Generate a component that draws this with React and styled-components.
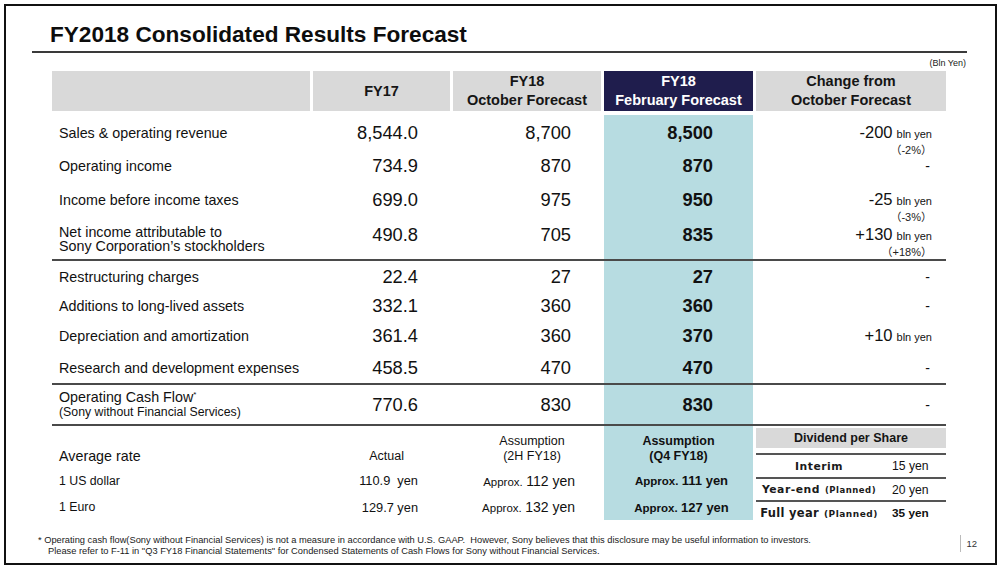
import React from 'react';
import styled, { createGlobalStyle } from 'styled-components';

const COLS = '258px 137px 148px 149px 190px';
const TEAL = '#b7dce1';
const NAVY = '#1f1d4d';
const GRAY = '#d9d9d9';
const RULE = '#4a4a4a';

const results = [
    { label: ['Sales & operating revenue'], fy17: '8,544.0', oct: '8,700', feb: '8,500', change: '-200', pct: '（-2%）', h: 36 },
    { label: ['Operating income'], fy17: '734.9', oct: '870', feb: '870', h: 30 },
    { label: ['Income before income taxes'], fy17: '699.0', oct: '975', feb: '950', change: '-25', pct: '（-3%）', h: 38 },
    { label: ['Net income attributable to', 'Sony Corporation’s stockholders'], fy17: '490.8', oct: '705', feb: '835', change: '+130', pct: '（+18%）', h: 40, lift: 8 },
];

const spending = [
    { label: ['Restructuring charges'], fy17: '22.4', oct: '27', feb: '27', h: 33 },
    { label: ['Additions to long-lived assets'], fy17: '332.1', oct: '360', feb: '360', h: 28 },
    { label: ['Depreciation and amortization'], fy17: '361.4', oct: '360', feb: '370', change: '+10', h: 32 },
    { label: ['Research and development expenses'], fy17: '458.5', oct: '470', feb: '470', h: 31 },
];

const rates = [
    { label: '1 US dollar', actual: '110.9  yen', oct: '112 yen', feb: '111 yen' },
    { label: '1 Euro', actual: '129.7 yen', oct: '132 yen', feb: '127 yen' },
];

const dividends = [
    { label: 'Interim', value: '15 yen', h: 24 },
    { label: 'Year-end', planned: true, value: '20 yen', h: 23 },
    { label: 'Full year', planned: true, value: '35 yen', h: 23, total: true },
];

const ResultRow = ({ row, rule }) => (
    <Row $h={row.h} $rule={rule} $lift={row.lift}>
        <Label $lh={row.label.length > 1 ? 14 : 20}>
            {row.label.map((l) => <span key={l}>{l}</span>)}
        </Label>
        <Num $pr={32}>{row.fy17}</Num>
        <Num $pr={30}>{row.oct}</Num>
        <Num $pr={40} $bold $teal>{row.feb}</Num>
        <Change>
            {row.change ? (
                <>
                    <ChangeMain>{row.change}<Unit>bln yen</Unit></ChangeMain>
                    {row.pct && <Pct>{row.pct}</Pct>}
                </>
            ) : (
                <Dash>-</Dash>
            )}
        </Change>
    </Row>
);

export default function App() {
    return (
        <>
            <GlobalStyle />
            <Slide>
                <TitleBar>
                    <Title>FY2018 Consolidated Results Forecast</Title>
                </TitleBar>
                <UnitNote>(Bln Yen)</UnitNote>

                <Table>
                    <HeadRow>
                        <HeadCell $bg={GRAY} />
                        <HeadCell $bg={GRAY}>FY17</HeadCell>
                        <HeadCell $bg={GRAY}><span>FY18</span><span>October Forecast</span></HeadCell>
                        <HeadCell $bg={NAVY} $light><span>FY18</span><span>February Forecast</span></HeadCell>
                        <HeadCell $bg={GRAY}><span>Change from</span><span>October Forecast</span></HeadCell>
                    </HeadRow>

                    <Body>
                        {results.map((r) => <ResultRow key={r.label[0]} row={r} />)}
                        {spending.map((r, i) => <ResultRow key={r.label[0]} row={r} rule={i === 0} />)}

                        <Row $h={41} $rule>
                            <Label $lh={15}>
                                <span>Operating Cash Flow<Star>*</Star></span>
                                <LabelSub>(Sony without Financial Services)</LabelSub>
                            </Label>
                            <Num $pr={32}>770.6</Num>
                            <Num $pr={30}>830</Num>
                            <Num $pr={40} $bold $teal>830</Num>
                            <Change><Dash>-</Dash></Change>
                        </Row>

                        <Rates>
                            <RateHead $pl={7}><RateTitle>Average rate</RateTitle></RateHead>
                            <RateHead $right $pr={46}>Actual</RateHead>
                            <RateHead $pl={10}><span>Assumption</span><span>(2H FY18)</span></RateHead>
                            <RateHead $teal $bold><span>Assumption</span><span>(Q4 FY18)</span></RateHead>

                            <Dividend>
                                <DivHead>Dividend per Share</DivHead>
                                {dividends.map((d) => (
                                    <DivRow key={d.label} $h={d.h}>
                                        <DivLabel $total={d.total}>
                                            {d.label}
                                            {d.planned && <Planned $total={d.total}>(Planned)</Planned>}
                                        </DivLabel>
                                        <DivValue $bold={d.total}>{d.value}</DivValue>
                                    </DivRow>
                                ))}
                            </Dividend>

                            {rates.map((r) => (
                                <React.Fragment key={r.label}>
                                    <RateCell $pl={7}>{r.label}</RateCell>
                                    <RateCell $right $pr={32} $size={12.8}>{r.actual}</RateCell>
                                    <RateCell $right $pr={26}>
                                        <span><Approx>Approx.</Approx> <RateNum>{r.oct}</RateNum></span>
                                    </RateCell>
                                    <RateCell $teal $bold $pl={6}>
                                        <span><Approx>Approx.</Approx> <RateNum $bold>{r.feb}</RateNum></span>
                                    </RateCell>
                                </React.Fragment>
                            ))}
                        </Rates>
                    </Body>
                </Table>

                <Footer>
                    <Note>
                        <span>* Operating cash flow(Sony without Financial Services) is not a measure in accordance with U.S. GAAP.&nbsp; However, Sony believes that this disclosure may be useful information to investors.</span>
                        <NoteIndent>Please refer to F-11 in "Q3 FY18 Financial Statements" for Condensed Statements of Cash Flows for Sony without Financial Services.</NoteIndent>
                    </Note>
                    <PageNo>12</PageNo>
                </Footer>
            </Slide>
        </>
    );
}

const GlobalStyle = createGlobalStyle`
    html, body {
        margin: 0;
        padding: 0;
        background: #fff;
    }
    body {
        font-family: "Liberation Sans", Arial, sans-serif;
        color: #111;
    }
`;

const Slide = styled.div`
    box-sizing: border-box;
    width: 993px;
    height: 561px;
    margin: 4px 0 0 4px;
    border: 2px solid #111;
    overflow: hidden;
    background: #fff;
`;

const TitleBar = styled.div`
    width: 935px;
    margin-left: 26px;
    padding: 15px 0 3px 18px;
    box-sizing: border-box;
    border-bottom: 2px solid #3a3a3a;
`;

const Title = styled.h1`
    margin: 0;
    font-size: 22.6px;
    line-height: 27px;
    font-weight: 700;
    color: #0d0d0d;
`;

const UnitNote = styled.div`
    width: 934px;
    margin: 4px 0 2px 26px;
    text-align: right;
    font-size: 9px;
    line-height: 12px;
    color: #222;
`;

const Table = styled.div`
    width: 894px;
    margin-left: 46px;
`;

const HeadRow = styled.div`
    display: grid;
    grid-template-columns: ${COLS};
    column-gap: 3px;
    height: 40px;
`;

const HeadCell = styled.div`
    display: flex;
    flex-direction: column;
    align-items: center;
    justify-content: center;
    background: ${({ $bg }) => $bg};
    color: ${({ $light }) => ($light ? '#fff' : '#151515')};
    font-size: 14.5px;
    font-weight: 700;
    line-height: 19px;
`;

const Body = styled.div`
    margin-top: 4px;
`;

const Row = styled.div`
    box-sizing: border-box;
    display: grid;
    grid-template-columns: ${COLS};
    column-gap: 3px;
    height: ${({ $h }) => $h}px;
    border-top: ${({ $rule }) => ($rule ? `2px solid ${RULE}` : 'none')};

    & > *:not(:first-child) {
        padding-bottom: ${({ $lift }) => $lift || 0}px;
    }
`;

const Label = styled.div`
    display: flex;
    flex-direction: column;
    justify-content: center;
    padding-left: 7px;
    font-size: 14.3px;
    line-height: ${({ $lh }) => $lh}px;
    white-space: nowrap;
`;

const LabelSub = styled.span`
    font-size: 12.3px;
`;

const Star = styled.sup`
    font-size: 8px;
    line-height: 0;
    vertical-align: 5px;
`;

const Num = styled.div`
    display: flex;
    align-items: center;
    justify-content: flex-end;
    padding-right: ${({ $pr }) => $pr}px;
    background: ${({ $teal }) => ($teal ? TEAL : 'transparent')};
    font-size: 18.3px;
    font-weight: ${({ $bold }) => ($bold ? 700 : 400)};
    line-height: 20px;
`;

const Change = styled.div`
    display: flex;
    flex-direction: column;
    align-items: flex-end;
    justify-content: center;
    padding-right: 14px;
`;

const ChangeMain = styled.div`
    font-size: 16.5px;
    line-height: 20px;
    white-space: nowrap;
`;

const Unit = styled.span`
    margin-left: 4px;
    font-size: 11px;
    color: #111;
`;

const Pct = styled.div`
    margin-bottom: -12px;
    font-family: "Liberation Sans", "Noto Sans CJK JP", sans-serif;
    font-size: 11px;
    line-height: 12px;
    color: #222;
`;

const Dash = styled.div`
    margin-right: 2px;
    font-size: 14px;
    line-height: 20px;
`;

const Rates = styled.div`
    display: grid;
    grid-template-columns: ${COLS};
    grid-template-rows: 41px 27px 26px;
    column-gap: 3px;
    border-top: 2px solid ${RULE};
`;

const RateHead = styled.div`
    display: flex;
    flex-direction: column;
    justify-content: flex-end;
    align-items: ${({ $right, $pl }) => ($right ? 'flex-end' : $pl === 7 ? 'flex-start' : 'center')};
    padding: 0 ${({ $pr }) => $pr || 0}px 3px ${({ $pl }) => $pl || 0}px;
    background: ${({ $teal }) => ($teal ? TEAL : 'transparent')};
    font-size: 12.5px;
    font-weight: ${({ $bold }) => ($bold ? 700 : 400)};
    line-height: 15px;
`;

const RateTitle = styled.span`
    font-size: 14.3px;
    line-height: 16px;
`;

const RateCell = styled.div`
    display: flex;
    align-items: center;
    justify-content: ${({ $right, $pl }) => ($right ? 'flex-end' : $pl === 7 ? 'flex-start' : 'center')};
    padding: 0 ${({ $pr }) => $pr || 0}px 0 ${({ $pl }) => $pl || 0}px;
    background: ${({ $teal }) => ($teal ? TEAL : 'transparent')};
    font-size: ${({ $size }) => $size || 12.3}px;
    font-weight: ${({ $bold }) => ($bold ? 700 : 400)};
    white-space: pre;
`;

const Approx = styled.span`
    font-size: 11.5px;
`;

const RateNum = styled.span`
    font-size: ${({ $bold }) => ($bold ? 13 : 14)}px;
`;

const Dividend = styled.div`
    grid-column: 5;
    grid-row: 1 / span 3;
    align-self: start;
    margin-top: 2px;
`;

const DivHead = styled.div`
    height: 20px;
    margin-bottom: 5px;
    background: ${GRAY};
    text-align: center;
    font-size: 12.5px;
    font-weight: 700;
    line-height: 20px;
    color: #151515;
`;

const DivRow = styled.div`
    box-sizing: border-box;
    display: grid;
    grid-template-columns: 126px 1fr;
    align-items: center;
    height: ${({ $h }) => $h}px;
    border-top: 2px solid #555;
`;

const DivLabel = styled.div`
    text-align: center;
    font-family: "DejaVu Sans", sans-serif;
    font-size: ${({ $total }) => ($total ? 11.5 : 10.8)}px;
    font-weight: 700;
    letter-spacing: ${({ $total }) => ($total ? 0.3 : 0.5)}px;
    color: #1a1a1a;
    white-space: nowrap;
`;

const Planned = styled.span`
    margin-left: 5px;
    font-size: ${({ $total }) => ($total ? 9 : 8.5)}px;
    letter-spacing: 0.5px;
`;

const DivValue = styled.div`
    padding-left: 10px;
    font-size: ${({ $bold }) => ($bold ? 11.8 : 12.2)}px;
    font-weight: ${({ $bold }) => ($bold ? 700 : 400)};
`;

const Footer = styled.div`
    display: flex;
    justify-content: space-between;
    align-items: flex-start;
    margin-top: 15px;
`;

const Note = styled.div`
    display: flex;
    flex-direction: column;
    margin-left: 32px;
    font-size: 9.3px;
    line-height: 11px;
    color: #1a1a1a;
    white-space: nowrap;
`;

const NoteIndent = styled.span`
    padding-left: 10px;
`;

const PageNo = styled.div`
    height: 17px;
    margin-right: 18px;
    padding-left: 5px;
    border-left: 1px solid #bbb;
    font-size: 9.5px;
    line-height: 17px;
    color: #333;
`;
